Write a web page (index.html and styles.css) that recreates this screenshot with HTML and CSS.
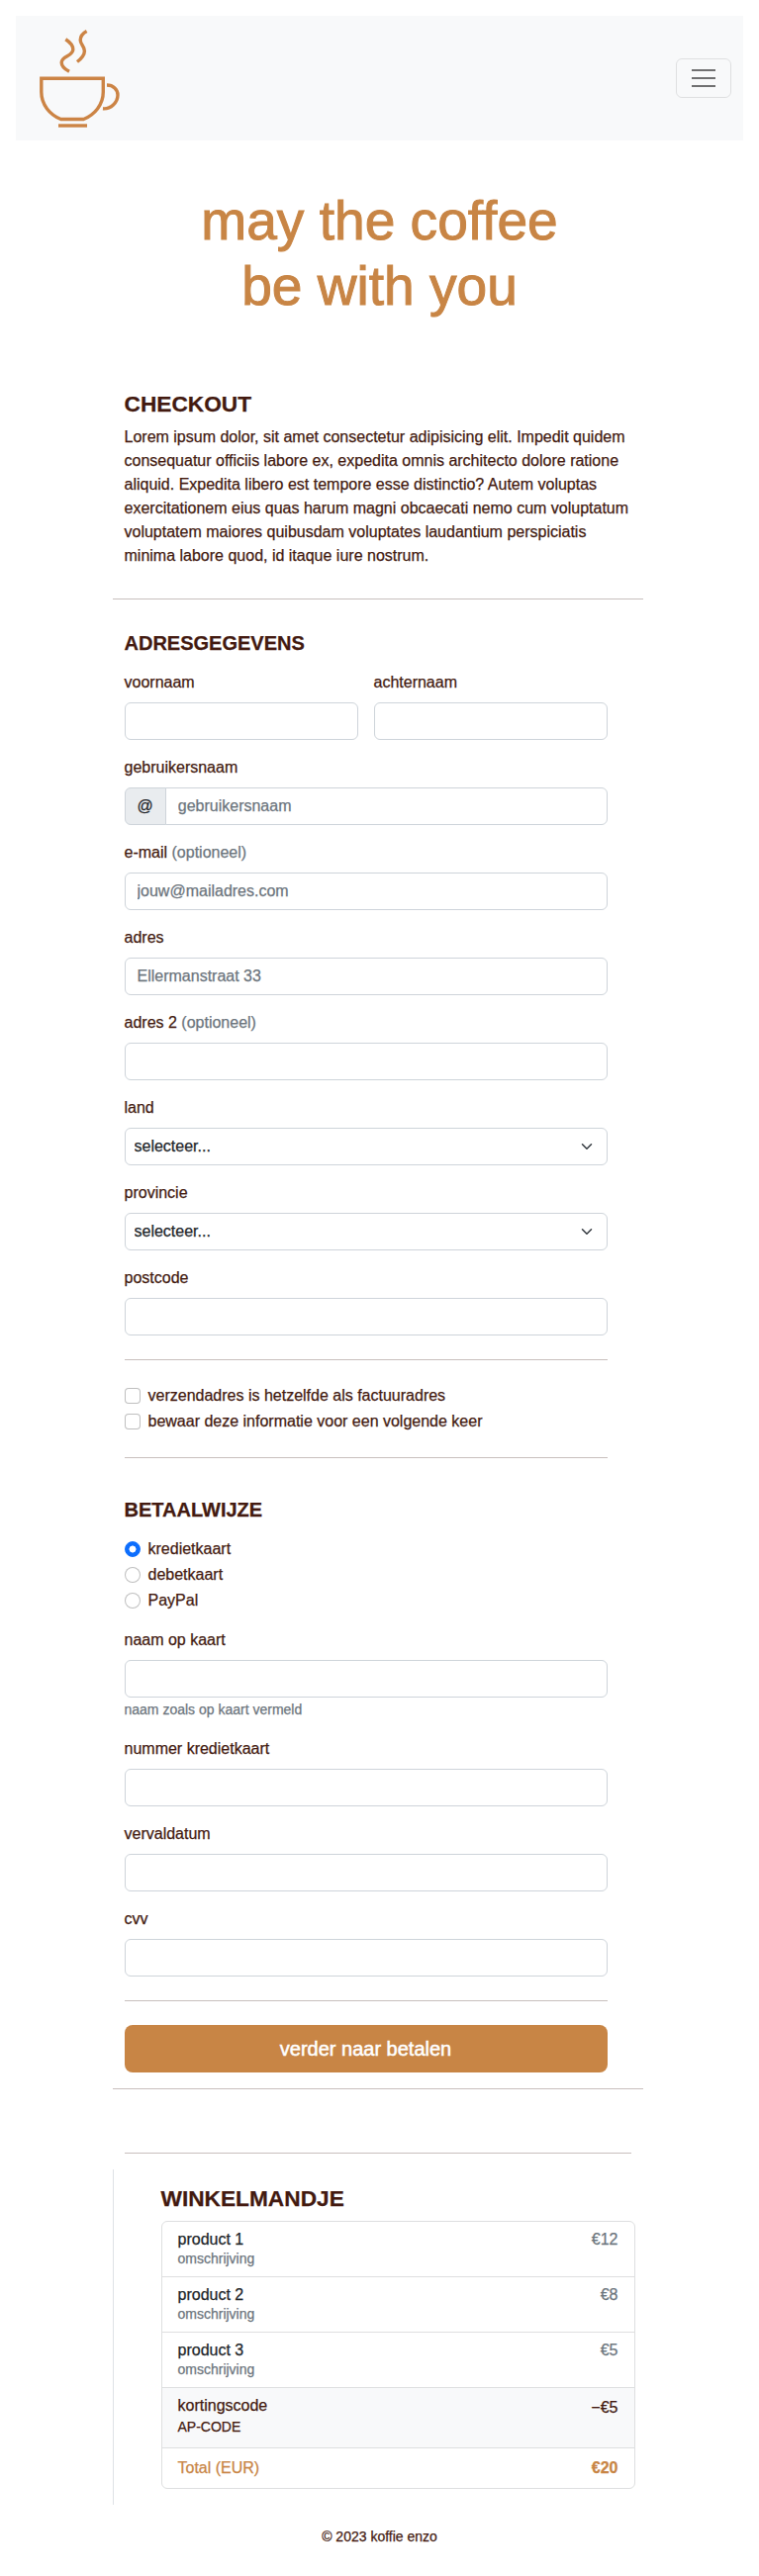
FILE: index.html
```html
<!DOCTYPE html>
<html lang="nl">
<head>
<meta charset="utf-8">
<title>koffie enzo - checkout</title>
<link rel="stylesheet" href="styles.css">
</head>
<body>
<nav class="navbar">
  <a class="brand" href="#" aria-label="koffie enzo">
    <svg class="logo" width="96" height="110" viewBox="34 24 96 110" fill="none" stroke="#cc8445" stroke-width="3.4">
      <path d="M41.8 79.2H104.3V93C104.3 106 95.5 116 84.5 120.5H61.5C50.5 116 41.8 106 41.8 93Z"/>
      <path d="M59 127H88"/>
      <path d="M108 86C114.5 86 119 90.5 119 96C119 103.5 112 110.5 104 109.8"/>
      <path d="M66.3 39.8C70 42.2 73.8 46 73.8 50C73.8 57 62.2 56.5 62.2 63.3C62.2 67 66.5 70.5 70 72.3"/>
      <path d="M87.6 31.5C84 33.5 81.2 36.5 81.2 40.5C81.2 45 85.4 46.5 85.4 51.5C85.4 56 81.5 59.8 78 62.5"/>
    </svg>
  </a>
  <button class="toggler" type="button" aria-label="menu">
    <svg width="30" height="30" viewBox="0 0 30 30"><path stroke="rgba(0,0,0,.55)" stroke-linecap="butt" stroke-width="2" d="M3 7h24M3 15h24M3 23h24"/></svg>
  </button>
</nav>

<h1 class="hero">may the coffee<br>be with you</h1>

<main class="page">
  <section class="intro">
    <h2 class="heading">CHECKOUT</h2>
    <p>Lorem ipsum dolor, sit amet consectetur adipisicing elit. Impedit quidem consequatur officiis labore ex, expedita omnis architecto dolore ratione aliquid. Expedita libero est tempore esse distinctio? Autem voluptas exercitationem eius quas harum magni obcaecati nemo cum voluptatum voluptatem maiores quibusdam voluptates laudantium perspiciatis minima labore quod, id itaque iure nostrum.</p>
  </section>
  <hr class="rule">

  <form class="form">
    <h3 class="subheading">ADRESGEGEVENS</h3>
    <div class="fields">
      <div class="pair">
        <div class="field"><label for="first">voornaam</label><input id="first" class="control" type="text"></div>
        <div class="field"><label for="last">achternaam</label><input id="last" class="control" type="text"></div>
      </div>
      <div class="field">
        <label for="user">gebruikersnaam</label>
        <div class="group"><span class="addon">@</span><input id="user" class="control" type="text" placeholder="gebruikersnaam"></div>
      </div>
      <div class="field"><label for="mail">e-mail <span class="muted">(optioneel)</span></label><input id="mail" class="control" type="email" placeholder="jouw@mailadres.com"></div>
      <div class="field"><label for="addr">adres</label><input id="addr" class="control" type="text" placeholder="Ellermanstraat 33"></div>
      <div class="field"><label for="addr2">adres 2 <span class="muted">(optioneel)</span></label><input id="addr2" class="control" type="text"></div>
      <div class="field"><label for="country">land</label>
        <div class="select"><select id="country" class="control"><option>selecteer...</option></select><svg class="chevron" width="16" height="12" viewBox="0 0 16 16"><path fill="none" stroke="#343a40" stroke-linecap="round" stroke-linejoin="round" stroke-width="2" d="m2 5 6 6 6-6"/></svg></div>
      </div>
      <div class="field"><label for="prov">provincie</label>
        <div class="select"><select id="prov" class="control"><option>selecteer...</option></select><svg class="chevron" width="16" height="12" viewBox="0 0 16 16"><path fill="none" stroke="#343a40" stroke-linecap="round" stroke-linejoin="round" stroke-width="2" d="m2 5 6 6 6-6"/></svg></div>
      </div>
      <div class="field"><label for="zip">postcode</label><input id="zip" class="control" type="text"></div>
    </div>
    <hr class="form-rule">
    <div class="checks">
      <label class="check"><input type="checkbox">verzendadres is hetzelfde als factuuradres</label>
      <label class="check"><input type="checkbox">bewaar deze informatie voor een volgende keer</label>
    </div>
    <hr class="form-rule">
    <h3 class="subheading payment">BETAALWIJZE</h3>
    <div class="checks">
      <label class="check"><input type="radio" name="pay" checked>kredietkaart</label>
      <label class="check"><input type="radio" name="pay">debetkaart</label>
      <label class="check"><input type="radio" name="pay">PayPal</label>
    </div>
    <div class="fields card">
      <div class="field"><label for="cname">naam op kaart</label><input id="cname" class="control" type="text"><div><small class="muted">naam zoals op kaart vermeld</small></div></div>
      <div class="field"><label for="cnum">nummer kredietkaart</label><input id="cnum" class="control" type="text"></div>
      <div class="field"><label for="cexp">vervaldatum</label><input id="cexp" class="control" type="text"></div>
      <div class="field"><label for="ccvv">cvv</label><input id="ccvv" class="control" type="text"></div>
    </div>
    <hr class="form-rule">
    <button class="submit" type="button">verder naar betalen</button>
  </form>
  <hr class="rule after-form">
  <hr class="rule inset">

  <aside class="cart">
    <h2 class="heading">WINKELMANDJE</h2>
    <ul class="list">
      <li class="item tight"><div><h4>product 1</h4><small class="muted">omschrijving</small></div><span class="muted">€12</span></li>
      <li class="item tight"><div><h4>product 2</h4><small class="muted">omschrijving</small></div><span class="muted">€8</span></li>
      <li class="item tight"><div><h4>product 3</h4><small class="muted">omschrijving</small></div><span class="muted">€5</span></li>
      <li class="item discount"><div><h4>kortingscode</h4><small>AP-CODE</small></div><span>−€5</span></li>
      <li class="item total"><span>Total (EUR)</span><strong>€20</strong></li>
    </ul>
  </aside>
</main>
<footer class="footer"><small>© 2023 koffie enzo</small></footer>
</body>
</html>
```
FILE: styles.css
```css
*, *::before, *::after { box-sizing: border-box; }
body {
  margin: 16px;
  font: 16px/24px "Liberation Sans", Arial, sans-serif;
  color: #431a10;
  background: #fff;
  -webkit-text-stroke: .25px currentColor;
}
h1, h2, h3, h4, p, ul { margin: 0; padding: 0; }
small { font-size: 14px; }
.muted { color: #6c757d; }

.navbar {
  display: flex;
  align-items: center;
  justify-content: space-between;
  height: 126px;
  padding: 8px 12px;
  background: #f8f9fa;
}
.brand { margin-left: 6px; }
.logo { display: block; }
.toggler {
  display: grid;
  place-items: center;
  width: 56px;
  height: 40px;
  padding: 0;
  background: none;
  border: 1px solid rgba(0, 0, 0, .1);
  border-radius: 6px;
}

.hero {
  margin-top: 48px;
  color: #c88545;
  font-size: 55.1px;
  font-weight: 400;
  line-height: 66.1px;
  text-align: center;
  -webkit-text-stroke-width: 1px;
}

.page { width: 536px; margin: 73px auto 0 97.5px; }
.intro { padding: 0 12px; }
.heading { margin-bottom: 8px; font-size: 22.7px; line-height: 27.2px; font-weight: 700; }
.subheading { margin-bottom: 16px; font-size: 20px; line-height: 24px; font-weight: 700; }
.rule, .form-rule { margin: 24px 0; border: 0; border-top: 1px solid #c8bfbd; }
.intro + .rule { margin: 31px 0 32px; }

.form { padding: 0 36px 0 12px; }
.fields { display: flex; flex-direction: column; gap: 16px; }
.fields.card { margin-top: 16px; }
.pair { display: grid; grid-template-columns: 1fr 1fr; gap: 16px; }
.field label { display: block; margin-bottom: 8px; }
.control {
  display: block;
  width: 100%;
  height: 38px;
  margin: 0;
  padding: 6px 12px;
  font: inherit;
  color: #212529;
  background: #fff;
  border: 1px solid #ced4da;
  border-radius: 6px;
  appearance: none;
  -webkit-text-stroke: .25px currentColor;
}
.control::placeholder { color: #6c757d; opacity: 1; }
.group { display: flex; }
.addon {
  padding: 6px 12px;
  color: #212529;
  background: #e9ecef;
  border: 1px solid #ced4da;
  border-radius: 6px 0 0 6px;
}
.group .control { flex: 1; margin-left: -1px; border-radius: 0 6px 6px 0; }
.select { display: grid; align-items: center; }
.select > * { grid-area: 1 / 1; }
.select .control { padding-left: 9px; }
.chevron { justify-self: end; margin-right: 13px; pointer-events: none; }

.checks { display: flex; flex-direction: column; gap: 2px; }
.check { display: flex; align-items: center; gap: 8px; height: 24px; }
.check input {
  width: 16px;
  height: 16px;
  margin: 0;
  background: #fff;
  border: 1px solid rgba(0, 0, 0, .25);
  border-radius: 4px;
  appearance: none;
}
.check input[type="radio"] { border-radius: 50%; }
.check input:checked {
  border-color: #0d6efd;
  background: radial-gradient(circle, #fff 3.2px, #0d6efd 3.8px);
}
.payment { margin-top: 40px; }
.submit {
  display: block;
  width: 100%;
  height: 48px;
  padding: 8px 16px;
  color: #fff;
  background: #c88545;
  border: 0;
  border-radius: 8px;
  font: 20px/30px "Liberation Sans", Arial, sans-serif;
  -webkit-text-stroke: .5px #fff;
}
.rule.after-form { margin: 16px 0 64px; }
.rule.inset { margin: 0 12px 16px; }

.cart {
  padding: 16px 8px 16px 48px;
  border-left: 1px solid #dee2e6;
}
.list { list-style: none; border: 1px solid #dedfe0; border-radius: 6px; overflow: hidden; }
.item { display: flex; justify-content: space-between; padding: 8px 16px; }
.item + .item { border-top: 1px solid #dedfe0; }
.item h4 { font-size: 16px; line-height: 19.2px; font-weight: 400; }
.tight { line-height: 20px; }
.tight h4 { color: #212529; }
.discount { background: #f8f9fa; }
.discount div { padding-bottom: .8px; }
.total { color: #c88545; }
.footer { margin-top: 20px; text-align: center; }
```
